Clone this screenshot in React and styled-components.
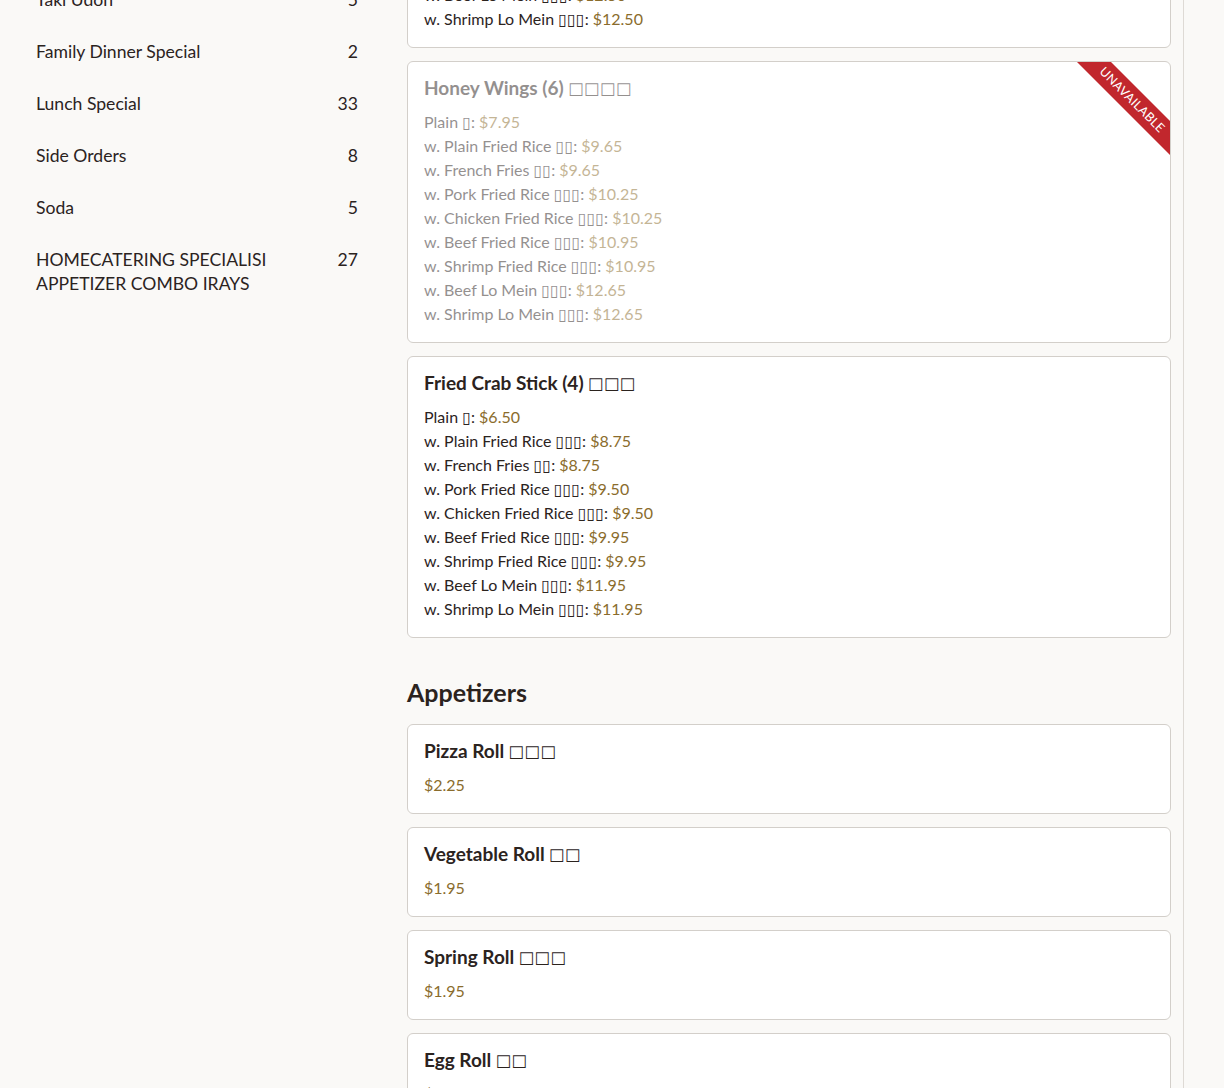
import React from "react";
import styled, { createGlobalStyle } from "styled-components";

const GlobalStyle = createGlobalStyle`
  html, body { margin: 0; padding: 0; background: #faf9f7; }
  body {
    font-family: Lato, "Noto Sans", sans-serif;
    color: #2b231e;
    overflow: hidden;
  }
`;

const Page = styled.div`
  display: flex;
  align-items: flex-start;
  height: 1088px;
  overflow: hidden;
`;

const Sidebar = styled.nav`
  width: 407px;
  flex-shrink: 0;
  box-sizing: border-box;
  padding: 0 49px 0 36px;
  margin-top: -26px;
`;

const CatRow = styled.div`
  display: flex;
  justify-content: space-between;
  align-items: flex-start;
  gap: 28px;
  padding: 14px 0;
  font-size: 17.6px;
  line-height: 24px;
  color: #2b231e;
`;

const CatCount = styled.span`
  flex-shrink: 0;
  text-align: right;
`;

const Main = styled.main`
  width: 777px;
  flex-shrink: 0;
  box-sizing: border-box;
  padding-right: 12px;
  border-right: 1px solid #dedad5;
  margin-top: -234px;
  padding-bottom: 200px;
`;

const SectionTitle = styled.h2`
  margin: 38px 0 16px;
  font-size: 25px;
  line-height: 32px;
  font-weight: 700;
  color: #2b231e;
`;

const CardList = styled.div`
  display: flex;
  flex-direction: column;
  gap: 13px;
`;

const Card = styled.article`
  position: relative;
  overflow: hidden;
  background: #fff;
  border: 1px solid #d3cfca;
  border-radius: 6px;
  padding: 16px;
`;

const Faded = styled.div`
  opacity: ${(p) => (p.$dim ? 0.5 : 1)};
`;

const Title = styled.h3`
  margin: 0 0 12px;
  font-size: 19px;
  line-height: 20px;
  height: 20px;
  font-weight: 700;
  color: #2b231e;
`;

const Lines = styled.ul`
  list-style: none;
  margin: 0;
  padding: 0;
`;

const Line = styled.li`
  font-size: 16px;
  line-height: 24px;
  height: 24px;
  color: #2b231e;
`;

const Price = styled.span`
  color: #8a6c2c;
`;

const Tofu = styled.span`
  font-family: "DejaVu Sans", sans-serif;
  font-weight: 400;
  line-height: 0;
  font-size: ${(p) => (p.$big ? "0.86em" : "1em")};
  letter-spacing: ${(p) => (p.$big ? "0.5px" : "0")};
  vertical-align: ${(p) => (p.$big ? "1px" : "baseline")};
`;

const Ribbon = styled.div`
  position: absolute;
  top: 26px;
  right: -32px;
  width: 140px;
  height: 24px;
  line-height: 24px;
  background: #c1272d;
  color: #fff;
  text-align: center;
  font-size: 12.5px;
  font-weight: 400;
  letter-spacing: 0.3px;
  transform: rotate(45deg);
`;

const zh = (n, big) => (
  <Tofu $big={big}>{(big ? "□" : "▯").repeat(n)}</Tofu>
);

const categories = [
  ["Taki Udon", 5],
  ["Family Dinner Special", 2],
  ["Lunch Special", 33],
  ["Side Orders", 8],
  ["Soda", 5],
  ["HOMECATERING SPECIALISI APPETIZER COMBO IRAYS", 27],
];

const combo = (base, prices, zhs) =>
  [
    ["Plain", base],
    ["w. Plain Fried Rice", prices[0]],
    ["w. French Fries", prices[1]],
    ["w. Pork Fried Rice", prices[2]],
    ["w. Chicken Fried Rice", prices[3]],
    ["w. Beef Fried Rice", prices[4]],
    ["w. Shrimp Fried Rice", prices[5]],
    ["w. Beef Lo Mein", prices[6]],
    ["w. Shrimp Lo Mein", prices[7]],
  ].map(([label, price], i) => ({ label, price, zh: zhs[i] }));

const comboItems = [
  {
    name: "Fried Chicken Wings (4)",
    zh: 4,
    lines: combo(
      "$7.75",
      ["$9.45", "$9.45", "$10.10", "$10.10", "$10.75", "$10.75", "$12.50", "$12.50"],
      [1, 3, 2, 3, 3, 3, 3, 3, 3]
    ),
  },
  {
    name: "Honey Wings (6)",
    zh: 4,
    unavailable: true,
    lines: combo(
      "$7.95",
      ["$9.65", "$9.65", "$10.25", "$10.25", "$10.95", "$10.95", "$12.65", "$12.65"],
      [1, 2, 2, 3, 3, 3, 3, 3, 3]
    ),
  },
  {
    name: "Fried Crab Stick (4)",
    zh: 3,
    lines: combo(
      "$6.50",
      ["$8.75", "$8.75", "$9.50", "$9.50", "$9.95", "$9.95", "$11.95", "$11.95"],
      [1, 3, 2, 3, 3, 3, 3, 3, 3]
    ),
  },
];

const appetizers = [
  { name: "Pizza Roll", zh: 3, price: "$2.25" },
  { name: "Vegetable Roll", zh: 2, price: "$1.95" },
  { name: "Spring Roll", zh: 3, price: "$1.95" },
  { name: "Egg Roll", zh: 2, price: "$1.95" },
  { name: "Shrimp Roll", zh: 2, price: "$2.25" },
];

export default function App() {
  return (
    <>
      <GlobalStyle />
      <Page>
        <Sidebar>
          {categories.map(([name, count]) => (
            <CatRow key={name}>
              <span>{name}</span>
              <CatCount>{count}</CatCount>
            </CatRow>
          ))}
        </Sidebar>
        <Main>
          <CardList>
            {comboItems.map((item) => (
              <Card key={item.name}>
                <Faded $dim={item.unavailable}>
                  <Title>
                    {item.name} {zh(item.zh, true)}
                  </Title>
                  <Lines>
                    {item.lines.map((l) => (
                      <Line key={l.label}>
                        {l.label} {zh(l.zh)}: <Price>{l.price}</Price>
                      </Line>
                    ))}
                  </Lines>
                </Faded>
                {item.unavailable && <Ribbon>UNAVAILABLE</Ribbon>}
              </Card>
            ))}
          </CardList>
          <SectionTitle>Appetizers</SectionTitle>
          <CardList>
            {appetizers.map((a) => (
              <Card key={a.name}>
                <Title>
                  {a.name} {zh(a.zh, true)}
                </Title>
                <Lines>
                  <Line>
                    <Price>{a.price}</Price>
                  </Line>
                </Lines>
              </Card>
            ))}
          </CardList>
        </Main>
      </Page>
    </>
  );
}
